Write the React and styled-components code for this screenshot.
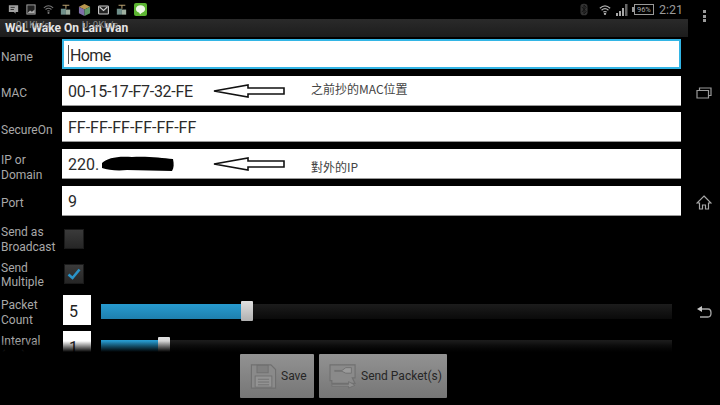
import React from "react";
import styled, { createGlobalStyle } from "styled-components";

const GlobalStyle = createGlobalStyle`
  html, body {
    margin: 0;
    padding: 0;
    background: #000;
  }
`;

const Screen = styled.div`
  position: relative;
  width: 720px;
  height: 405px;
  overflow: hidden;
  background: #000;
  font-family: Roboto, "Liberation Sans", sans-serif;
  display: flex;
  flex-direction: column;
`;

const StatusBar = styled.div`
  height: 19px;
  display: flex;
  align-items: center;
  padding: 0 37px 0 8px;
  flex-shrink: 0;
`;

const NotifyIcons = styled.div`
  display: flex;
  align-items: center;
  gap: 6.8px;
`;

const SystemIcons = styled.div`
  margin-left: auto;
  display: flex;
  align-items: center;
  gap: 5px;
`;

const Clock = styled.span`
  font-size: 12.5px;
  color: #9a9a9a;
`;

const Battery = styled.span`
  position: relative;
  box-sizing: border-box;
  width: 20px;
  height: 11px;
  margin-left: 1px;
  border: 1px solid #999;
  color: #aaa;
  font-size: 7.5px;
  line-height: 9px;
  text-align: center;
  &::before {
    content: "";
    position: absolute;
    left: -3px;
    top: 2px;
    width: 2px;
    height: 5px;
    background: #999;
  }
`;

const OverflowDots = styled.div`
  position: absolute;
  top: 10px;
  left: 703px;
  display: flex;
  flex-direction: column;
  gap: 1.5px;
  span {
    width: 3px;
    height: 3px;
    background: #9a9a9a;
  }
`;

const Body = styled.div`
  flex: 1;
  display: flex;
  min-height: 0;
`;

const Main = styled.div`
  width: 688px;
  display: flex;
  flex-direction: column;
`;

const ActionBar = styled.div`
  position: relative;
  height: 18px;
  flex-shrink: 0;
  background: linear-gradient(#2a2a2a, #1c1c1c);
  padding-left: 5px;
  font-size: 12px;
  font-weight: 700;
  line-height: 19px;
  color: #e4e4e4;
`;

const SpeedOverlay = styled.span`
  position: absolute;
  top: 0;
  left: ${(p) => p.$left}px;
  font-size: 9.5px;
  font-weight: 400;
  line-height: 11px;
  color: #8c8c8c;
`;

const Form = styled.div`
  position: relative;
  height: 315px;
  overflow: hidden;
  flex-shrink: 0;
  padding: 2px 7px 0 0;
  box-sizing: border-box;
  display: flex;
  flex-direction: column;
  gap: 8px;
`;

const Group = styled.div`
  display: flex;
  flex-direction: column;
  flex-shrink: 0;
  gap: ${(p) => p.$gap}px;
`;

const Row = styled.div`
  height: 30px;
  flex-shrink: 0;
  display: flex;
  align-items: center;
`;

const Label = styled.div`
  width: 62px;
  flex-shrink: 0;
  box-sizing: border-box;
  padding: ${(p) => p.$drop}px 0 0 1px;
  font-size: 12px;
  line-height: 14.5px;
  color: #a8a8a8;
`;

const Field = styled.div`
  flex: 1;
  height: 30px;
  box-sizing: border-box;
  background: #fff;
  border: ${(p) => (p.$focused ? "2px solid #33b5e5" : "none")};
  border-bottom: ${(p) => (p.$focused ? "2px solid #33b5e5" : "1px solid #999")};
  display: flex;
  align-items: center;
  padding: 2px 0 0 ${(p) => (p.$focused ? 4 : 6)}px;
  font-size: 16px;
  letter-spacing: ${(p) => p.$tracking || 0}px;
  color: #2a2a2a;
`;

const Caret = styled.span`
  width: 1px;
  height: 19px;
  background: #555;
  margin: -2px 1px 0 0;
`;

const MacValue = styled.span`
  width: 145px;
`;

const IpValue = styled.span`
  width: 145px;
  display: flex;
  align-items: center;
  gap: 3px;
`;

const Note = styled.span`
  margin: ${(p) => p.$shift}px 0 0 26px;
  font-size: 12px;
  letter-spacing: 0;
  color: #444;
  font-family: "Noto Sans CJK TC", Roboto, sans-serif;
`;

const Check = styled.div`
  box-sizing: border-box;
  width: 20px;
  height: 20px;
  margin-left: 2px;
  background: linear-gradient(#3a3a3a, #262626);
  border: 1px solid #1a1a1a;
  display: flex;
  align-items: center;
  justify-content: center;
`;

const CountBox = styled.div`
  width: 28px;
  height: 30px;
  margin-left: 1px;
  flex-shrink: 0;
  box-sizing: border-box;
  background: #fff;
  padding-left: 6px;
  font-size: 16px;
  line-height: 33px;
  color: #222;
`;

const Track = styled.div`
  position: relative;
  width: 571px;
  height: 15px;
  margin: 3px 0 0 10px;
  flex-shrink: 0;
  background: linear-gradient(#1c1c1c, #0a0a0a);
`;

const Fill = styled.div`
  height: 100%;
  background: linear-gradient(#279bd0, #1e7fae);
`;

const Thumb = styled.div`
  position: absolute;
  top: -3px;
  bottom: -2px;
  width: 12px;
  background: linear-gradient(#e0e0e0, #b0b0b0);
  border-radius: 1px;
`;

const ScrollFade = styled.div`
  position: absolute;
  left: 0;
  right: 0;
  bottom: 0;
  height: 11px;
  background: linear-gradient(rgba(0, 0, 0, 0), #000);
`;

const Footer = styled.div`
  flex: 1;
  display: flex;
  justify-content: center;
  align-items: flex-start;
  gap: 5px;
  padding: 2px 0 0 0;
  margin-left: -1px;
`;

const Button = styled.div`
  box-sizing: border-box;
  width: ${(p) => p.$width}px;
  height: 44px;
  background: linear-gradient(#929292, #767676);
  border-radius: 1px;
  display: flex;
  align-items: center;
  padding-left: 10px;
  gap: 4px;
  font-size: 12px;
  color: #262626;
  white-space: nowrap;
`;

const NavRail = styled.div`
  flex: 1;
  display: flex;
  flex-direction: column;
  align-items: center;
  padding: 65px 0 0 0;
  gap: 91px;
`;

const IconSlot = styled.div`
  width: 18px;
  height: 18px;
  display: flex;
  align-items: center;
  justify-content: center;
`;

function Arrow() {
  return (
    <svg width="72" height="14" viewBox="0 0 72 14" style={{ flexShrink: 0 }}>
      <path d="M1 7 L35 1 V4 H71 V10 H35 V13 Z" fill="#fff" stroke="#111" strokeWidth="1.6" />
    </svg>
  );
}

function Scribble() {
  return (
    <svg width="72" height="16" viewBox="0 0 72 16" style={{ flexShrink: 0 }}>
      <path d="M0 7 C6 2 14 0 30 1 C45 0 60 2 71 3 C72 8 72 12 70 15 C55 15 40 14 25 14 C15 15 6 14 0 12 Z" fill="#000" />
    </svg>
  );
}

function StatusIcons() {
  return (
    <NotifyIcons>
      <svg width="11" height="11" viewBox="0 0 13 12">
        <path d="M1 1 H12 V9 H9 V11 L7 9 H1 Z" fill="#a0a0a0" />
        <path d="M3 3.5 H8 M3 6 H7" stroke="#222" strokeWidth="1" />
      </svg>
      <svg width="10" height="11" viewBox="0 0 10 12">
        <rect x="0.5" y="1" width="9" height="10" fill="#222" stroke="#aaa" />
        <path d="M1 10 L4 7 L6 8.5 L9 6 V10 Z" fill="#aaa" />
      </svg>
      <svg width="11" height="11" viewBox="0 0 13 12">
        <path d="M1 4 Q6.5 -1 12 4 M3 6 Q6.5 3 10 6 M5 8 Q6.5 7 8 8" fill="none" stroke="#777" strokeWidth="1.2" />
        <circle cx="6.5" cy="10" r="1.2" fill="#777" />
      </svg>
      <svg width="11" height="12" viewBox="0 0 13 13">
        <path d="M3 1 H11 M7 1 V5" stroke="#b8a070" strokeWidth="1.2" />
        <rect x="1" y="5" width="6" height="7" fill="#6f8f8a" />
        <rect x="7" y="6" width="5" height="6" fill="#9fb0a0" />
      </svg>
      <svg width="13" height="14" viewBox="0 0 14 15">
        <path d="M7 1 L13 4 L7 7 L1 4 Z" fill="#b8964e" />
        <path d="M1 4 L7 7 V14 L1 11 Z" fill="#7f6fa8" />
        <path d="M13 4 L7 7 V14 L13 11 Z" fill="#5f9a6a" />
      </svg>
      <svg width="11" height="10" viewBox="0 0 13 11">
        <rect x="0.7" y="0.7" width="11.6" height="9.6" rx="1" fill="#222" stroke="#ccc" strokeWidth="1.3" />
        <path d="M2 2 L6.5 6 L11 2" fill="none" stroke="#ccc" strokeWidth="1.4" />
      </svg>
      <svg width="11" height="12" viewBox="0 0 13 13">
        <path d="M3 1 H11 M7 1 V5" stroke="#b8a070" strokeWidth="1.2" />
        <rect x="1" y="5" width="6" height="7" fill="#6f8f8a" />
        <rect x="7" y="6" width="5" height="6" fill="#9fb0a0" />
      </svg>
      <svg width="13" height="13" viewBox="0 0 13 13">
        <rect width="13" height="13" rx="2" fill="#5cb531" />
        <ellipse cx="6.5" cy="6" rx="4.6" ry="3.8" fill="#eef7e6" />
        <path d="M5 9 L6 11.5 L8.5 9 Z" fill="#eef7e6" />
      </svg>
    </NotifyIcons>
  );
}

function SystemStatus() {
  return (
    <SystemIcons>
      <svg width="8" height="13" viewBox="0 0 9 14">
        <rect x="0.5" y="0.5" width="8" height="13" rx="3.5" fill="#333" />
        <path d="M2 4 L7 9.5 L4.5 12 V2 L7 4.5 L2 10" fill="none" stroke="#111" strokeWidth="1" />
      </svg>
      <svg width="12" height="12" viewBox="0 0 14 13" style={{ marginLeft: 6 }}>
        <path d="M1 4.5 Q7 -1 13 4.5 M3 6.8 Q7 3 11 6.8 M5 9 Q7 7.5 9 9" fill="none" stroke="#b0b0b0" strokeWidth="1.4" />
        <circle cx="7" cy="11" r="1.4" fill="#b0b0b0" />
      </svg>
      <svg width="12" height="12" viewBox="0 0 12 12">
        <path d="M0 12 V9 H2 V12 Z M3 12 V7 H5 V12 Z M6 12 V4 H8 V12 Z" fill="#a8a8a8" />
        <path d="M9 12 V0 H11.5 V12 Z" fill="#666" />
      </svg>
      <Battery>96%</Battery>
      <Clock>2:21</Clock>
    </SystemIcons>
  );
}

function DiskIcon() {
  return (
    <svg width="27" height="26" viewBox="0 0 28 28" style={{ flexShrink: 0 }}>
      <path d="M1 2 H22 L27 7 V27 H1 Z" fill="#8a8a8a" stroke="#707070" strokeWidth="1.2" />
      <rect x="7" y="2.5" width="12" height="8" fill="#7f7f7f" stroke="#707070" />
      <rect x="5" y="14" width="18" height="12" fill="#939393" stroke="#707070" />
      <path d="M8 17.5 H20 M8 20.5 H20 M8 23.5 H20" stroke="#707070" />
    </svg>
  );
}

function PacketIcon() {
  return (
    <svg width="28" height="26" viewBox="0 0 30 28" style={{ flexShrink: 0 }}>
      <path d="M1 2 H28 V16 H25 L28 22 H3 V19 H1 Z" fill="#8a8a8a" stroke="#707070" strokeWidth="1.2" />
      <path d="M6 8 H14 L18 5 H24 V11 H18 L14 9 H6 Z" fill="#9a9a9a" stroke="#707070" />
      <path d="M3 23 H21 V20 L28 24 L21 27 V25 H3 Z" fill="#8f8f8f" stroke="#707070" />
    </svg>
  );
}

export default function App() {
  return (
    <>
      <GlobalStyle />
      <Screen>
        <StatusBar>
          <StatusIcons />
          <SystemStatus />
        </StatusBar>
        <OverflowDots>
          <span />
          <span />
          <span />
        </OverflowDots>
        <Body>
          <Main>
            <ActionBar>
              WoL Wake On Lan Wan
              <SpeedOverlay $left={16}>0.1Kb/s</SpeedOverlay>
              <SpeedOverlay $left={82}>U: 0Kb/s</SpeedOverlay>
            </ActionBar>
            <Form>
              <Group $gap={6.67}>
                <Row>
                  <Label $drop={6}>Name</Label>
                  <Field $focused $tracking={-0.6}>
                    <Caret />
                    Home
                  </Field>
                </Row>
                <Row>
                  <Label $drop={6}>MAC</Label>
                  <Field $tracking={-0.3}>
                    <MacValue>00-15-17-F7-32-FE</MacValue>
                    <Arrow />
                    <Note $shift={-6}>之前抄的MAC位置</Note>
                  </Field>
                </Row>
                <Row>
                  <Label $drop={6}>SecureOn</Label>
                  <Field>FF-FF-FF-FF-FF-FF</Field>
                </Row>
                <Row>
                  <Label $drop={8}>IP or Domain</Label>
                  <Field>
                    <IpValue>
                      220.
                      <Scribble />
                    </IpValue>
                    <Arrow />
                    <Note $shift={4}>對外的IP</Note>
                  </Field>
                </Row>
                <Row>
                  <Label $drop={6}>Port</Label>
                  <Field>9</Field>
                </Row>
              </Group>
              <Group $gap={5.67}>
                <Row>
                  <Label $drop={2}>Send as Broadcast</Label>
                  <Check />
                </Row>
                <Row>
                  <Label $drop={2}>Send Multiple</Label>
                  <Check>
                    <svg width="14" height="12" viewBox="0 0 14 12">
                      <path d="M1.5 6.5 L5.5 10 L12.5 1.5" fill="none" stroke="#2a93c8" strokeWidth="2.6" />
                    </svg>
                  </Check>
                </Row>
                <Row>
                  <Label $drop={6}>Packet Count</Label>
                  <CountBox>5</CountBox>
                  <Track>
                    <Fill style={{ width: 140 }} />
                    <Thumb style={{ left: 140 }} />
                  </Track>
                </Row>
                <Row>
                  <Label $drop={6}>Interval (ms)</Label>
                  <CountBox>1</CountBox>
                  <Track>
                    <Fill style={{ width: 57 }} />
                    <Thumb style={{ left: 57 }} />
                  </Track>
                </Row>
              </Group>
              <ScrollFade />
            </Form>
            <Footer>
              <Button $width={74}>
                <DiskIcon />
                Save
              </Button>
              <Button $width={128}>
                <PacketIcon />
                Send Packet(s)
              </Button>
            </Footer>
          </Main>
          <NavRail>
            <IconSlot>
              <svg width="16" height="12" viewBox="0 0 16 12">
                <path d="M1 3.5 H12.5 V11 H1 Z M3.5 3 V1 H15 V8.5 H13" fill="none" stroke="#9a9a9a" strokeWidth="1.2" />
              </svg>
            </IconSlot>
            <IconSlot>
              <svg width="16" height="15" viewBox="0 0 16 15">
                <path d="M8 1 L15 8 H12.5 V14 H9.5 V10 H6.5 V14 H3.5 V8 H1 Z" fill="none" stroke="#a8a8a8" strokeWidth="1.2" />
              </svg>
            </IconSlot>
            <IconSlot>
              <svg width="16" height="13" viewBox="0 0 16 13">
                <path d="M5 4 H12 Q15 4 15 8 Q15 12 12 12 H4" fill="none" stroke="#a8a8a8" strokeWidth="1.3" />
                <path d="M1 4 L6 1 V7 Z" fill="#c8c8c8" />
              </svg>
            </IconSlot>
          </NavRail>
        </Body>
      </Screen>
    </>
  );
}
